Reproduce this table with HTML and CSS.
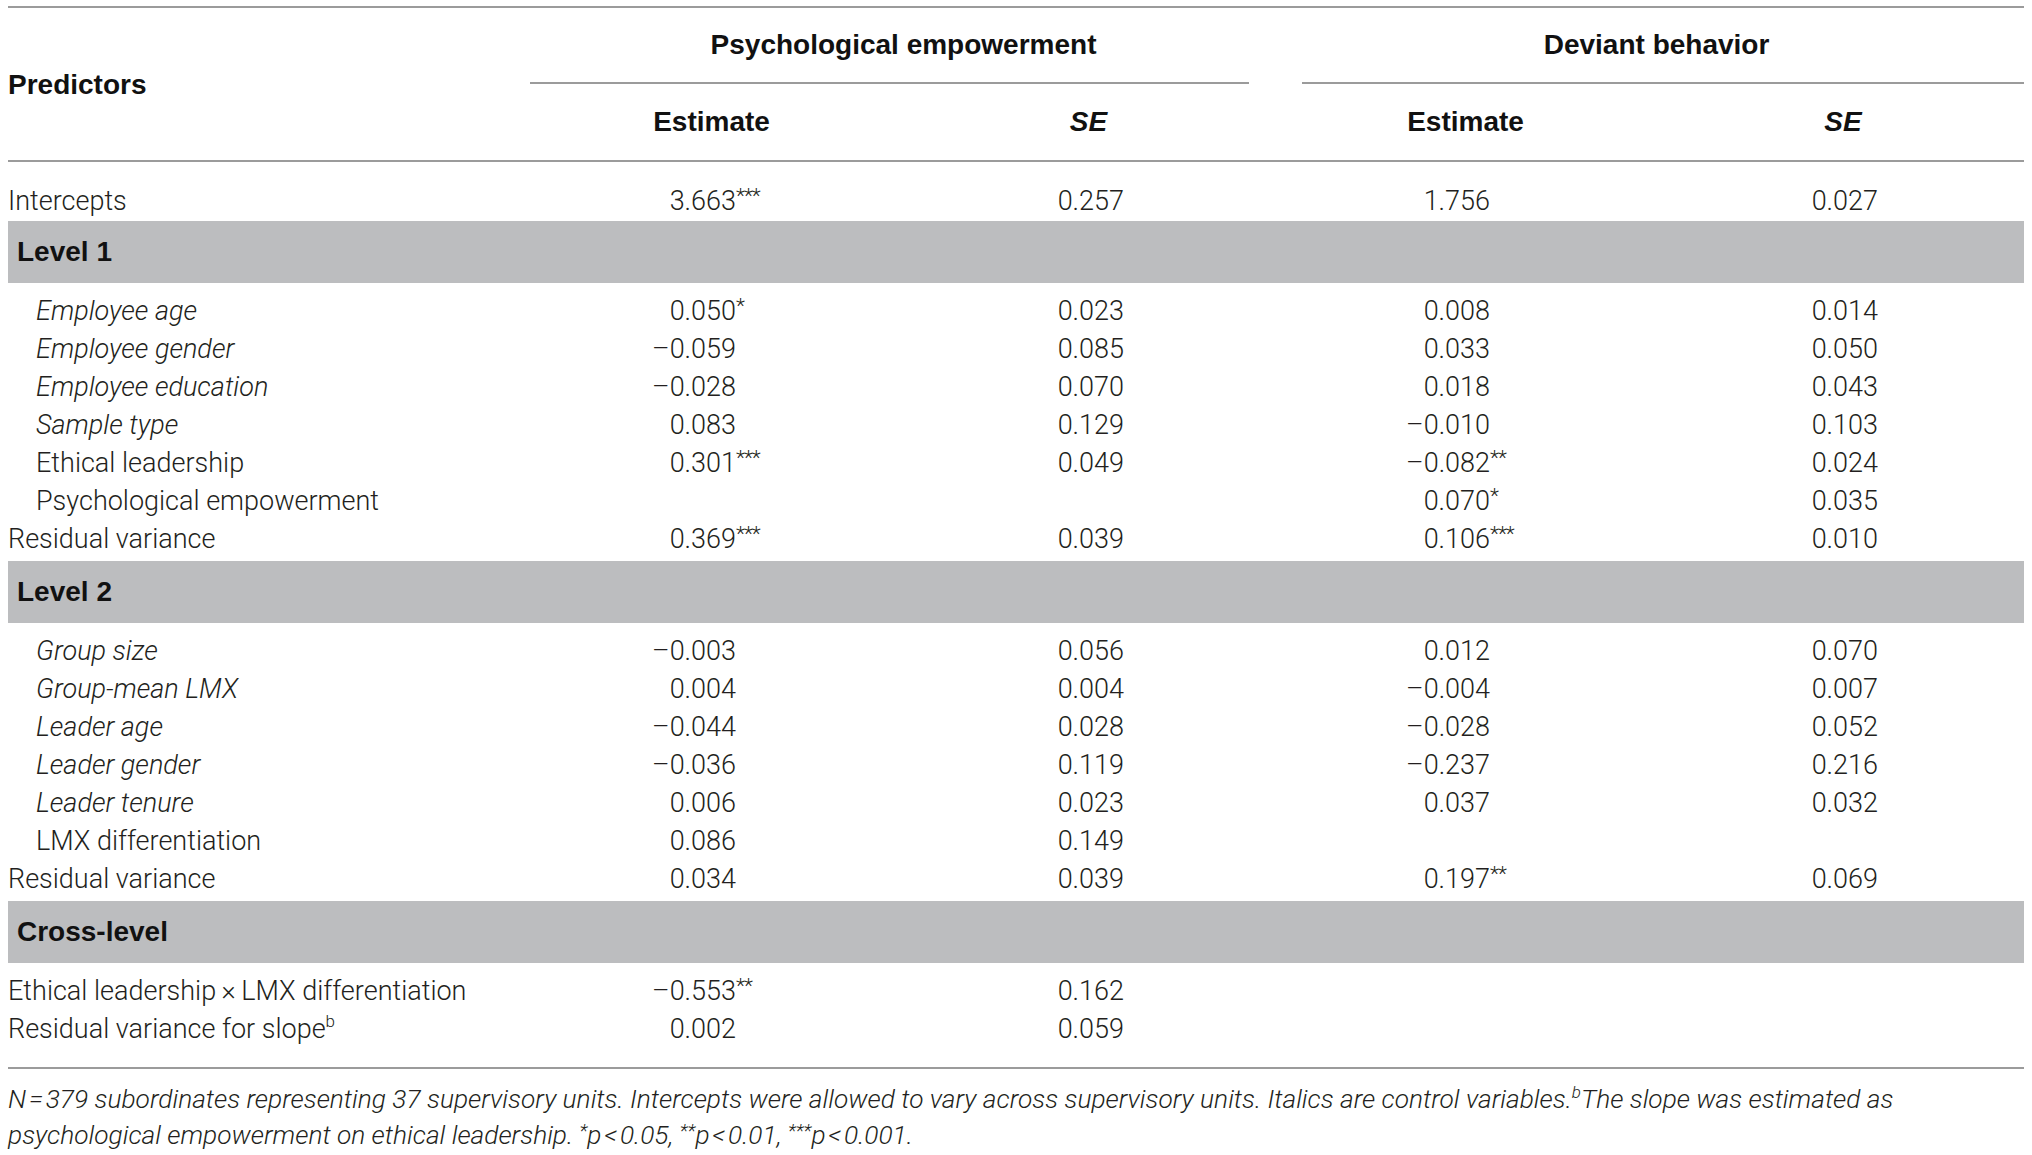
FILE: index.html
```html
<!DOCTYPE html>
<html lang="en">
<head>
<meta charset="utf-8">
<title>Multilevel results</title>
<link rel="stylesheet" href="styles.css">
</head>
<body>
<table class="tbl">
  <colgroup>
    <col class="c0"><col class="c1"><col class="c2"><col class="c3"><col class="c4">
  </colgroup>
  <thead>
    <tr class="h1">
      <th rowspan="2" class="pred">Predictors</th>
      <th colspan="2" class="grp"><div class="gl gl1">Psychological empowerment</div></th>
      <th colspan="2" class="grp"><div class="gl gl2">Deviant behavior</div></th>
    </tr>
    <tr class="h2">
      <th class="sub">Estimate</th>
      <th class="sub"><i>SE</i></th>
      <th class="sub">Estimate</th>
      <th class="sub last"><i>SE</i></th>
    </tr>
  </thead>
  <tbody>
    <tr class="r first-row">
      <td class="lab">Intercepts</td>
      <td class="est"><span class="n">3.663</span><sup>***</sup></td>
      <td class="se"><span class="n">0.257</span></td>
      <td class="est"><span class="n">1.756</span></td>
      <td class="se"><span class="n">0.027</span></td>
    </tr>
    <tr class="band"><td colspan="5">Level 1</td></tr>
    <tr class="r top">
      <td class="lab ind it">Employee age</td>
      <td class="est"><span class="n">0.050</span><sup>*</sup></td>
      <td class="se"><span class="n">0.023</span></td>
      <td class="est"><span class="n">0.008</span></td>
      <td class="se"><span class="n">0.014</span></td>
    </tr>
    <tr class="r">
      <td class="lab ind it">Employee gender</td>
      <td class="est"><span class="n">–0.059</span></td>
      <td class="se"><span class="n">0.085</span></td>
      <td class="est"><span class="n">0.033</span></td>
      <td class="se"><span class="n">0.050</span></td>
    </tr>
    <tr class="r">
      <td class="lab ind it">Employee education</td>
      <td class="est"><span class="n">–0.028</span></td>
      <td class="se"><span class="n">0.070</span></td>
      <td class="est"><span class="n">0.018</span></td>
      <td class="se"><span class="n">0.043</span></td>
    </tr>
    <tr class="r">
      <td class="lab ind it">Sample type</td>
      <td class="est"><span class="n">0.083</span></td>
      <td class="se"><span class="n">0.129</span></td>
      <td class="est"><span class="n">–0.010</span></td>
      <td class="se"><span class="n">0.103</span></td>
    </tr>
    <tr class="r">
      <td class="lab ind">Ethical leadership</td>
      <td class="est"><span class="n">0.301</span><sup>***</sup></td>
      <td class="se"><span class="n">0.049</span></td>
      <td class="est"><span class="n">–0.082</span><sup>**</sup></td>
      <td class="se"><span class="n">0.024</span></td>
    </tr>
    <tr class="r">
      <td class="lab ind">Psychological empowerment</td>
      <td class="est"></td>
      <td class="se"></td>
      <td class="est"><span class="n">0.070</span><sup>*</sup></td>
      <td class="se"><span class="n">0.035</span></td>
    </tr>
    <tr class="r bot">
      <td class="lab">Residual variance</td>
      <td class="est"><span class="n">0.369</span><sup>***</sup></td>
      <td class="se"><span class="n">0.039</span></td>
      <td class="est"><span class="n">0.106</span><sup>***</sup></td>
      <td class="se"><span class="n">0.010</span></td>
    </tr>
    <tr class="band"><td colspan="5">Level 2</td></tr>
    <tr class="r top">
      <td class="lab ind it">Group size</td>
      <td class="est"><span class="n">–0.003</span></td>
      <td class="se"><span class="n">0.056</span></td>
      <td class="est"><span class="n">0.012</span></td>
      <td class="se"><span class="n">0.070</span></td>
    </tr>
    <tr class="r">
      <td class="lab ind it">Group-mean LMX</td>
      <td class="est"><span class="n">0.004</span></td>
      <td class="se"><span class="n">0.004</span></td>
      <td class="est"><span class="n">–0.004</span></td>
      <td class="se"><span class="n">0.007</span></td>
    </tr>
    <tr class="r">
      <td class="lab ind it">Leader age</td>
      <td class="est"><span class="n">–0.044</span></td>
      <td class="se"><span class="n">0.028</span></td>
      <td class="est"><span class="n">–0.028</span></td>
      <td class="se"><span class="n">0.052</span></td>
    </tr>
    <tr class="r">
      <td class="lab ind it">Leader gender</td>
      <td class="est"><span class="n">–0.036</span></td>
      <td class="se"><span class="n">0.119</span></td>
      <td class="est"><span class="n">–0.237</span></td>
      <td class="se"><span class="n">0.216</span></td>
    </tr>
    <tr class="r">
      <td class="lab ind it">Leader tenure</td>
      <td class="est"><span class="n">0.006</span></td>
      <td class="se"><span class="n">0.023</span></td>
      <td class="est"><span class="n">0.037</span></td>
      <td class="se"><span class="n">0.032</span></td>
    </tr>
    <tr class="r">
      <td class="lab ind">LMX differentiation</td>
      <td class="est"><span class="n">0.086</span></td>
      <td class="se"><span class="n">0.149</span></td>
      <td class="est"></td>
      <td class="se"></td>
    </tr>
    <tr class="r bot">
      <td class="lab">Residual variance</td>
      <td class="est"><span class="n">0.034</span></td>
      <td class="se"><span class="n">0.039</span></td>
      <td class="est"><span class="n">0.197</span><sup>**</sup></td>
      <td class="se"><span class="n">0.069</span></td>
    </tr>
    <tr class="band"><td colspan="5">Cross-level</td></tr>
    <tr class="r top">
      <td class="lab">Ethical leadership&#8201;×&#8201;LMX differentiation</td>
      <td class="est"><span class="n">–0.553</span><sup>**</sup></td>
      <td class="se"><span class="n">0.162</span></td>
      <td class="est"></td>
      <td class="se"></td>
    </tr>
    <tr class="r last-row">
      <td class="lab">Residual variance for slope<sup class="fn">b</sup></td>
      <td class="est"><span class="n">0.002</span></td>
      <td class="se"><span class="n">0.059</span></td>
      <td class="est"></td>
      <td class="se"></td>
    </tr>
  </tbody>
</table>
<p class="note"><i>N</i>&#8202;=&#8202;379 subordinates representing 37 supervisory units. Intercepts were allowed to vary across supervisory units. Italics are control variables.<sup class="fn">b</sup>The slope was estimated as psychological empowerment on ethical leadership. <sup class="st">*</sup><i>p</i>&#8202;&lt;&#8202;0.05, <sup class="st">**</sup><i>p</i>&#8202;&lt;&#8202;0.01, <sup class="st">***</sup><i>p</i>&#8202;&lt;&#8202;0.001.</p>
</body>
</html>
```

FILE: styles.css
```css
html, body {
  margin: 0;
  padding: 0;
  background: #ffffff;
}

body {
  padding: 6px 8px 0 8px;
  color: #231f20;
  font-family: "Roboto", "Liberation Sans", Arial, sans-serif;
  font-weight: 300;
  font-size: 27px;
}

.tbl {
  width: 2016px;
  table-layout: fixed;
  border-collapse: separate;
  border-spacing: 0;
  border-top: 2px solid #9b9b9b;
  border-bottom: 2px solid #9b9b9b;
}

.c0 { width: 515px; }
.c1 { width: 377px; }
.c2 { width: 377px; }
.c3 { width: 377px; }
.c4 { width: 370px; }

th {
  font-family: "Liberation Sans", Arial, sans-serif;
  font-weight: 700;
  font-size: 28px;
  color: #111;
  padding: 0;
}

th i { font-style: italic; }

.pred {
  text-align: left;
  vertical-align: middle;
  border-bottom: 2px solid #9b9b9b;
  padding-top: 2px;
}

.grp {
  height: 76px;
  vertical-align: bottom;
}

.gl {
  height: 74px;
  display: flex;
  align-items: center;
  justify-content: center;
  border-bottom: 2px solid #9b9b9b;
  box-sizing: content-box;
}

.gl1 {
  margin: 0 28px 0 7px;
  padding-left: 28px;
}

.gl2 {
  margin: 0 0 0 25px;
  padding-right: 13px;
}

.sub {
  height: 76px;
  text-align: center;
  vertical-align: middle;
  border-bottom: 2px solid #9b9b9b;
}

.sub.last { padding-left: 8px; }

td {
  padding: 0;
  height: 38px;
  line-height: 38px;
  vertical-align: middle;
  white-space: nowrap;
}

.first-row td { padding-top: 20px; padding-bottom: 1px; }
.top td { padding-top: 9px; }
.bot td { padding-bottom: 3px; }
.last-row td { padding-bottom: 19px; }

.ind { padding-left: 28px; }
.it { font-style: italic; }

.est { padding-left: 113px; }
.se { padding-left: 124px; }

.n {
  display: inline-block;
  width: 100px;
  text-align: right;
}

td sup {
  font-size: 21px;
  line-height: 0;
  vertical-align: 7px;
  letter-spacing: -1px;
}

.band td {
  background: #bcbdbf;
  height: 62px;
  line-height: 62px;
  padding: 0 0 0 9px;
  font-family: "Liberation Sans", Arial, sans-serif;
  font-weight: 700;
  font-size: 28px;
  color: #111;
}

td sup.fn {
  font-size: 17px;
  line-height: 0;
  vertical-align: 11px;
  font-style: normal;
  letter-spacing: 0;
}

.note {
  margin: 12px 0 0 0;
  width: 1960px;
  font-style: italic;
  font-size: 26.3px;
  line-height: 36px;
}

.note sup {
  line-height: 0;
}

.note sup.fn {
  font-size: 17px;
  vertical-align: 10px;
}

.note sup.st {
  font-size: 19px;
  vertical-align: 7px;
}
```
